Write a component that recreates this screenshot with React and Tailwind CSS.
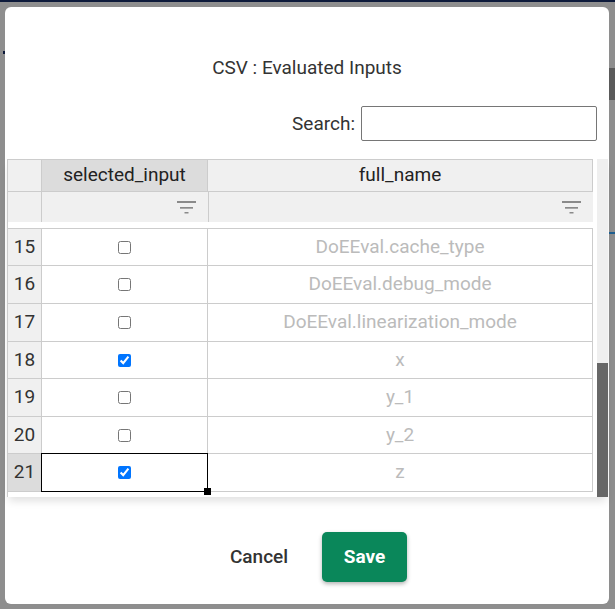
import React from "react";

const rows = [
  { n: 15, checked: false, name: "DoEEval.cache_type", h: "h-[37px]" },
  { n: 16, checked: false, name: "DoEEval.debug_mode", h: "h-[38px]" },
  { n: 17, checked: false, name: "DoEEval.linearization_mode", h: "h-[38px]" },
  { n: 18, checked: true, name: "x", h: "h-[37px]" },
  { n: 19, checked: false, name: "y_1", h: "h-[38px]" },
  { n: 20, checked: false, name: "y_2", h: "h-[37px]" },
  { n: 21, checked: true, name: "z", h: "h-[38px]", selected: true },
];

function FilterIcon() {
  return (
    <svg width="20" height="13" viewBox="0 0 20 13" className="block">
      <rect x="0" y="0" width="19" height="2" fill="#8a8a8a" />
      <rect x="3" y="6" width="13" height="1.7" fill="#8a8a8a" />
      <rect x="7.5" y="11" width="4" height="1.5" fill="#8a8a8a" />
    </svg>
  );
}

export default function App() {
  return (
    <div className="relative w-[615px] h-[609px] overflow-hidden bg-[#8e8e8e] border-t-[2px] border-[#0d1a3a] font-['Roboto',sans-serif]">
      <div className="absolute right-0 top-[66px] w-[6px] h-[32px] bg-[#5a5a5a]" />
      <div className="absolute right-0 top-[230px] w-[6px] h-[2px] bg-[#1f5f8f]" />
      <div className="absolute left-[3px] top-[49px] w-[2px] h-[3px] bg-[#0d1a3a]" />

      <div className="ml-[5px] mt-[5px] w-[604px] h-[597px] bg-white rounded-[6px] flex flex-col">
        <div className="pt-[50px] text-center text-[19px] leading-[21px] text-[#333]">
          CSV : Evaluated Inputs
        </div>

        <div className="mt-[28px] flex justify-end items-center pr-[12px] gap-[6px]">
          <span className="text-[19px] leading-[21px] text-[#333]">Search:</span>
          <input
            type="text"
            className="w-[236px] h-[35px] border border-[#767676] rounded-[2px] outline-none"
          />
        </div>

        <div className="mt-[18px] ml-[2px] flex w-[601px] h-[338px] shadow-[0_6px_8px_-2px_rgba(0,0,0,0.12)] bg-white">
          <div className="flex flex-col w-[586px] border-t border-l border-[#cccccc]">
            {/* header row */}
            <div className="flex h-[32px] border-b border-[#cccccc]">
              <div className="w-[34px] bg-[#f0f0f0] border-r border-[#cccccc]" />
              <div className="w-[166px] bg-[#dcdcdc] border-r border-[#cccccc] flex items-center justify-center text-[19px] text-[#222]">
                selected_input
              </div>
              <div className="w-[385px] bg-[#f0f0f0] border-r border-[#cccccc] flex items-center justify-center text-[19px] text-[#222]">
                full_name
              </div>
            </div>
            {/* filter row */}
            <div className="flex h-[30px] bg-[#f0f0f0]">
              <div className="w-[34px] border-r border-[#cccccc]" />
              <div className="w-[166px] flex items-center justify-end pr-[11px] pt-[1px]">
                <FilterIcon />
              </div>
              <div className="w-[385px] border-l border-[#cccccc] flex items-center justify-end pr-[11px] pt-[1px]">
                <FilterIcon />
              </div>
            </div>
            <div className="h-[6px] bg-white" />
            {/* data */}
            <div className="flex flex-col border-t border-[#cccccc]">
              {rows.map((r) => (
                <div key={r.n} className={`flex ${r.h} border-b border-[#cccccc]`}>
                  <div
                    className={`w-[34px] border-r border-[#cccccc] flex items-center justify-center text-[19px] text-[#333] ${
                      r.selected ? "bg-[#dcdcdc]" : "bg-[#f0f0f0]"
                    }`}
                  >
                    {r.n}
                  </div>
                  <div className="relative w-[166px] border-r border-[#cccccc] flex items-center justify-center">
                    <input
                      type="checkbox"
                      defaultChecked={r.checked}
                      readOnly
                      className="w-[13px] h-[13px] m-0 pointer-events-none"
                    />
                    {r.selected && (
                      <>
                        <div className="absolute left-[-1px] top-[-1px] right-[-1px] bottom-[-1px] border border-black" />
                        <div className="absolute right-[-4px] bottom-[-4px] w-[7px] h-[7px] bg-black" />
                      </>
                    )}
                  </div>
                  <div className="w-[385px] border-r border-[#cccccc] flex items-center justify-center text-[19px] text-[#bbbbbb]">
                    {r.name}
                  </div>
                </div>
              ))}
            </div>
          </div>
          <div className="w-[4px]" />
          <div className="w-[11px] bg-[#efefef] flex flex-col justify-end">
            <div className="h-[134px] bg-[#676767]" />
          </div>
        </div>

        <div className="mt-[35px] flex justify-center items-center gap-[16px] pl-[5px]">
          <button className="h-[50px] px-[18px] text-[19px] font-medium text-[#333] bg-transparent">
            Cancel
          </button>
          <button className="w-[85px] h-[50px] rounded-[5px] bg-[#0a875a] text-white text-[19px] font-bold shadow-[0_2px_4px_rgba(0,0,0,0.3)]">
            Save
          </button>
        </div>
      </div>
    </div>
  );
}
